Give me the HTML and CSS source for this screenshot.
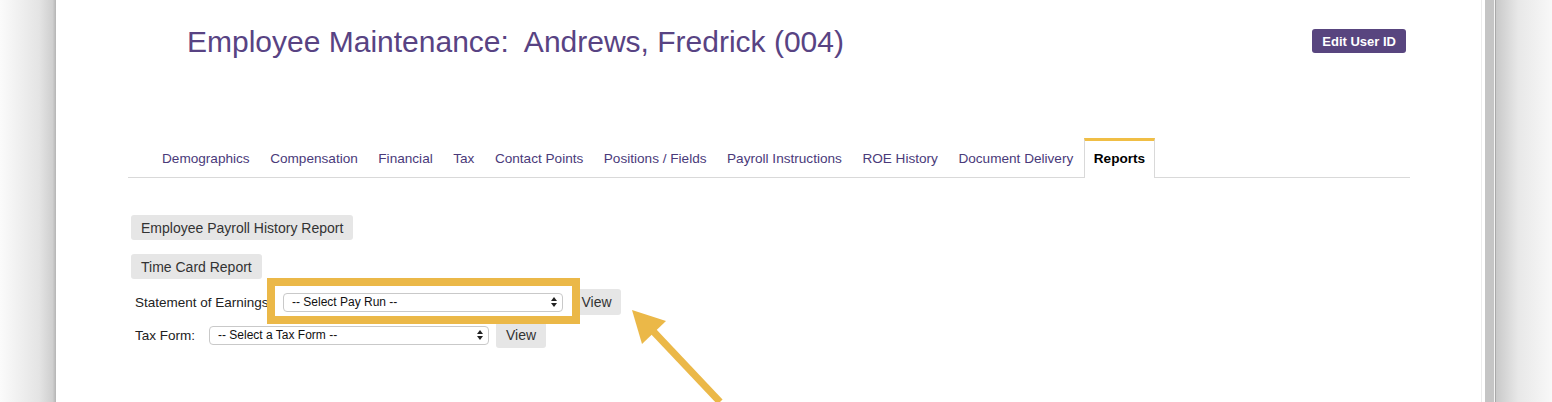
FILE: index.html
```html
<!DOCTYPE html>
<html lang="en">
<head>
  <meta charset="UTF-8" />
  <title>Employee Maintenance</title>
  <link rel="stylesheet" href="styles.css">
</head>
<body>
  <div class="frame">
    <div class="shade-left"></div>
    <div class="window">
      <div class="container">
        <div class="header">
          <h1>Employee Maintenance:&nbsp; Andrews, Fredrick (004)</h1>
          <button class="btn-edit">Edit User ID</button>
        </div>

        <ul class="tabs">
          <li><a href="#">Demographics</a></li>
          <li><a href="#">Compensation</a></li>
          <li><a href="#">Financial</a></li>
          <li><a href="#">Tax</a></li>
          <li><a href="#">Contact Points</a></li>
          <li><a href="#">Positions / Fields</a></li>
          <li><a href="#">Payroll Instructions</a></li>
          <li><a href="#">ROE History</a></li>
          <li><a href="#">Document Delivery</a></li>
          <li class="active"><a href="#">Reports</a></li>
        </ul>

        <div class="reports">
          <button class="btn-report">Employee Payroll History Report</button>
          <button class="btn-report">Time Card Report</button>
          <div class="report-row row-soe">
            <label for="payRun">Statement of Earnings</label>
            <span class="select-wrap">
              <select id="payRun">
                <option>-- Select Pay Run --</option>
              </select>
            </span>
            <button class="btn-view">View</button>
          </div>
          <div class="report-row row-tax">
            <label for="taxForm">Tax Form:</label>
            <span class="select-wrap">
              <select id="taxForm">
                <option>-- Select a Tax Form --</option>
              </select>
            </span>
            <button class="btn-view">View</button>
          </div>
        </div>
      </div>
    </div>
    <div class="shade-right">
      <div class="edge-line"></div>
      <div class="scroll-track"></div>
      <div class="edge-dark"></div>
      <div class="shade-fade"></div>
    </div>

    <!-- callout drawn over the screenshot -->
    <div class="callout-box"></div>
    <svg class="callout-arrow" width="140" height="110" viewBox="0 0 140 110">
      <line x1="32" y1="30" x2="100" y2="102" stroke="#ebb848" stroke-width="7" />
      <polygon points="12,10 22,44 46,21" fill="#ebb848" />
    </svg>
  </div>
</body>
</html>
```

FILE: styles.css
```css
body {
  margin: 0;
  font-family: "Liberation Sans", Arial, sans-serif;
  background: #fff;
  overflow: hidden;
}
.frame {
  position: relative;
  display: flex;
  height: 402px;
}
.shade-left {
  width: 56px;
  flex: none;
  background: linear-gradient(to right, #fbfbfb 0%, #e4e4e4 70%, #cfcfcf 94%, #b4b4b4 100%);
}
.window {
  flex: 1;
  background: #fff;
}
.shade-right {
  flex: none;
  display: flex;
  width: 71px;
}
.edge-line {
  width: 1px;
  background: #ececec;
  margin-right: 3px;
}
.scroll-track {
  width: 9px;
  background: #c5c5c5;
  border-right: 1px solid #f4f4f4;
}
.edge-dark {
  width: 1px;
  background: #a9a9a9;
}
.shade-fade {
  flex: 1;
  background: linear-gradient(to right, #c9c9c9 0%, #e8e8e8 40%, #f8f8f8 100%);
}
.container {
  margin: 0 71px 0 72px;
}
.header {
  display: flex;
  justify-content: space-between;
  align-items: flex-start;
  height: 138px;
  padding-left: 59px;
  padding-right: 4px;
  box-sizing: border-box;
}
h1 {
  margin: 24px 0 0;
  font-size: 30px;
  font-weight: normal;
  color: #584383;
  line-height: 36px;
}
.btn-edit {
  margin-top: 29px;
  height: 24px;
  padding: 0 10px;
  border: none;
  border-radius: 3px;
  background: #58457f;
  color: #fff;
  font-family: inherit;
  font-size: 13px;
  font-weight: bold;
}
.tabs {
  display: flex;
  list-style: none;
  margin: 0;
  padding: 0 0 0 24px;
  border-bottom: 1px solid #d9d9d9;
}
.tabs li {
  margin-right: 0.5px;
  margin-bottom: -1px;
}
.tabs a {
  display: block;
  padding: 9px 9px 10px;
  line-height: 18px;
  font-size: 13.6px;
  color: #4a3a7a;
  text-decoration: none;
  border: 1px solid transparent;
  border-top-width: 3px;
  border-bottom: none;
}
.tabs .active a {
  color: #000;
  font-weight: bold;
  background: #fff;
  border-color: #d9d9d9;
  border-top-color: #f0be45;
}
.reports {
  display: flex;
  flex-direction: column;
  align-items: flex-start;
  padding: 37px 0 0 3px;
}
.btn-report, .btn-view {
  border: none;
  border-radius: 3px;
  background: #e6e6e6;
  color: #333;
  font-family: inherit;
  font-size: 14px;
  height: 25px;
  padding: 0 10px;
}
.btn-report {
  margin-bottom: 14px;
}
.report-row {
  display: flex;
  align-items: center;
  font-size: 13.5px;
  color: #222;
  padding-left: 4px;
}
.row-soe {
  margin-top: -4px;
  height: 26px;
}
.row-tax {
  margin-top: 7px;
  height: 26px;
}
.row-soe label {
  width: 148px;
}
.row-tax label {
  width: 74px;
}
.select-wrap {
  position: relative;
  display: inline-block;
}
.select-wrap select {
  appearance: none;
  -webkit-appearance: none;
  display: block;
  width: 280px;
  height: 19px;
  padding: 0 20px 0 8px;
  border: 1px solid #c9c9c9;
  border-radius: 4px;
  background: #fff;
  font-family: inherit;
  font-size: 12px;
  color: #111;
}
.select-wrap::before,
.select-wrap::after {
  content: "";
  position: absolute;
  right: 6px;
  border-left: 3px solid transparent;
  border-right: 3px solid transparent;
}
.select-wrap::before {
  top: 4px;
  border-bottom: 4px solid #222;
}
.select-wrap::after {
  top: 10px;
  border-top: 4px solid #222;
}
.btn-view {
  margin-left: 9px;
  height: 26px;
  width: 49px;
  padding: 0;
  font-size: 14px;
}
.row-tax .btn-view {
  margin-left: 7px;
  width: 50px;
}
.callout-box {
  position: absolute;
  left: 267px;
  top: 278px;
  width: 313px;
  height: 46px;
  box-sizing: border-box;
  border: 8px solid #ebb848;
}
.callout-arrow {
  position: absolute;
  left: 620px;
  top: 300px;
}
```
